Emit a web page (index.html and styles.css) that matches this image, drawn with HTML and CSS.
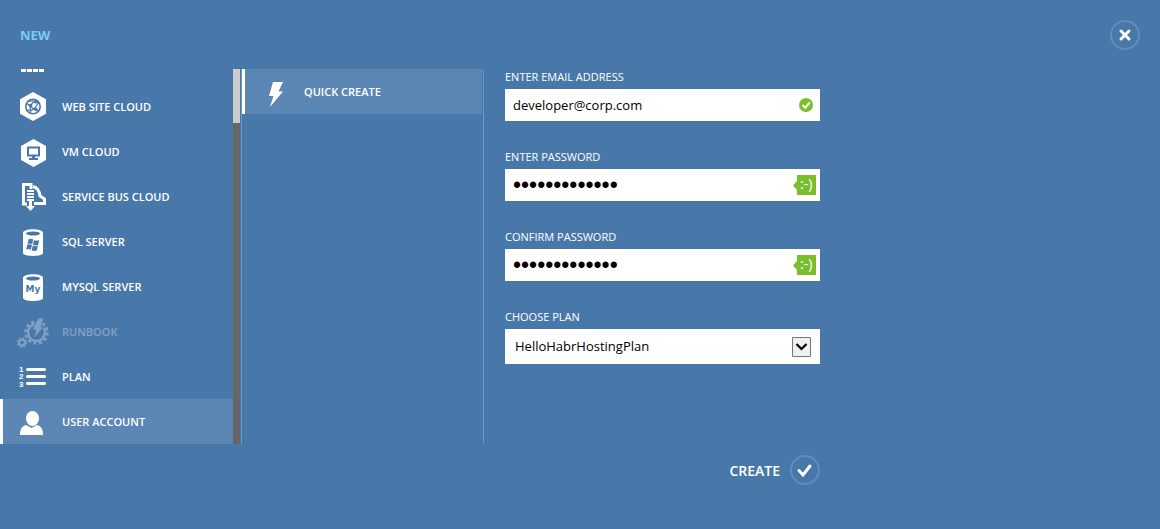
FILE: index.html
```html
<!DOCTYPE html>
<html lang="en">
<head>
<meta charset="utf-8">
<title>New user account</title>
<link rel="stylesheet" href="styles.css">
</head>
<body>
<header class="top">
  <h1 class="title">NEW</h1>
  <button class="round" type="button" aria-label="Close">
    <svg width="30" height="30" viewBox="0 0 30 30"><path d="M11 11l8 8M19 11l-8 8" stroke="#fff" stroke-width="3" stroke-linecap="round"/></svg>
  </button>
</header>
<main class="drawer">
  <nav class="services">
    <ul class="list">
      <li class="item item-cut">
        <svg class="icon" width="32" height="32" viewBox="0 0 32 32"><path d="M4 0h5v3H4zM10 0h5v3h-5zM16 0h5v3h-5zM22 0h5v3h-5z" fill="#fff"/></svg>
      </li>
      <li class="item">
        <svg class="icon" width="32" height="32" viewBox="0 0 32 32"><path d="M16 1l13 7.300v14.500L16 30 3 22.800V8.300z" fill="#fff"/><g fill="none" stroke="#4878aa"><circle cx="16" cy="15.500" r="7.200" stroke-width="1.600"/><path d="M10 12.500q6 5.500 12 8M14 21.500q-3-7 4.500-12M11 10.500q6-2 11.500 2.500M11 19q6 2 10-7" stroke-width="1.200"/></g><g fill="#4878aa"><circle cx="13.500" cy="14.500" r="1.800"/><circle cx="18.500" cy="11" r="1.500"/><circle cx="19" cy="18.500" r="1.700"/></g></svg>
        <a class="name" href="#">WEB SITE CLOUD</a>
      </li>
      <li class="item">
        <svg class="icon" width="32" height="32" viewBox="0 0 32 32"><path d="M16.500 3L29 10v14l-12.500 7L4 24V10z" fill="#fff"/><path d="M11 11.500h11v8H11z" fill="none" stroke="#4878aa" stroke-width="2"/><path d="M15 20h3v2h3v2h-9v-2h3z" fill="#4878aa"/></svg>
        <a class="name" href="#">VM CLOUD</a>
      </li>
      <li class="item">
        <svg class="icon" width="32" height="32" viewBox="0 0 32 32"><path d="M10 23H6.500V3.500H14V8M16 5.500c4.500 1 6.500 5 7 9.500l4.500 3V22.500H17" fill="none" stroke="#fff" stroke-width="3"/><path d="M9 9h9l1 1v11H9z" fill="#4878aa"/><path d="M10 9h7v2h-7zM10 12h7v2h-7zM10 15h7v2h-7zM10 18h7v2h-7zM12 20h3v5h3l-4.500 5L9 25h3z" fill="#fff"/></svg>
        <a class="name" href="#">SERVICE BUS CLOUD</a>
      </li>
      <li class="item">
        <svg class="icon" width="32" height="32" viewBox="0 0 32 32"><path d="M6 7c0-5 20-5 20 0v20c0 4-20 4-20 0z" fill="#fff"/><ellipse cx="16" cy="7.500" rx="7" ry="2" fill="#4878aa"/><path d="M11.500 13.500q2.500-1.500 4.700 0l-1 4.700q-2.500-1.500-4.700 0zM17 14q2.500 1.500 5.200 0l-1 4.700q-2.500 1.500-5.200 0zM10.200 19q2.500-1.500 4.700 0l-1 4.700q-2.500-1.500-4.700 0zM15.700 19.500q2.500 1.500 5.200 0l-1 4.700q-2.500 1.500-5.200 0z" fill="#4878aa"/></svg>
        <a class="name" href="#">SQL SERVER</a>
      </li>
      <li class="item">
        <svg class="icon" width="32" height="32" viewBox="0 0 32 32"><path d="M6 7c0-5 20-5 20 0v20c0 4-20 4-20 0z" fill="#fff"/><ellipse cx="16" cy="7.500" rx="7" ry="2" fill="#4878aa"/><text class="mark-my" x="16" y="21" text-anchor="middle">My</text></svg>
        <a class="name" href="#">MYSQL SERVER</a>
      </li>
      <li class="item item-off">
        <svg class="icon" width="32" height="32" viewBox="0 0 32 32"><g fill="none" stroke="#fff"><circle cx="19.500" cy="16.500" r="8.500" stroke-width="2.500"/><circle cx="19.500" cy="16.500" r="11" stroke-width="2.500" stroke-dasharray="3 2.760"/><circle cx="5" cy="26.500" r="2.800" stroke-width="2"/><circle cx="5" cy="26.500" r="4.200" stroke-width="2" stroke-dasharray="1.800 1.500"/></g><path d="M21 2h6l-3 9h3L16 23l3-9h-4z" fill="#fff" stroke="#4878aa"/></svg>
        <a class="name" aria-disabled="true">RUNBOOK</a>
      </li>
      <li class="item">
        <svg class="icon" width="32" height="32" viewBox="0 0 32 32"><path d="M10.500 8.500h17M10.500 15.500h17M10.500 22.500h17" stroke="#fff" stroke-width="3" stroke-linecap="round"/><g class="mark-num"><text x="2" y="11">1</text><text x="2" y="18">2</text><text x="2" y="26">3</text></g></svg>
        <a class="name" href="#">PLAN</a>
      </li>
      <li class="item item-on">
        <svg class="icon" width="32" height="32" viewBox="0 0 32 32"><path d="M3 29c0-6 2-9 6-10l5.500 3L20 19c4 1 6 4 6 10z" fill="#fff"/><ellipse cx="15.500" cy="12.500" rx="6.500" ry="7.500" fill="#fff"/></svg>
        <a class="name" href="#" aria-current="true">USER ACCOUNT</a>
      </li>
    </ul>
    <div class="track"><div class="thumb"></div></div>
  </nav>
  <section class="modes">
    <div class="item item-on">
      <svg class="icon" width="32" height="32" viewBox="0 0 32 32"><path d="M13 6h10l-4.500 9.500H23L10 31l3.500-11H9z" fill="#fff"/></svg>
      <a class="name" href="#">QUICK CREATE</a>
    </div>
  </section>
  <form class="form">
    <div class="field">
      <label class="label" for="email">ENTER EMAIL ADDRESS</label>
      <div class="box">
        <input class="input" id="email" type="text" value="developer@corp.com">
        <svg class="badge badge-ok" width="14" height="14" viewBox="0 0 14 14"><circle cx="7" cy="7" r="7" fill="#78be2d"/><path d="M3.500 7l2.700 2.800 4.500-5.300" fill="none" stroke="#fff" stroke-width="2"/></svg>
      </div>
    </div>
    <div class="field">
      <label class="label" for="pass">ENTER PASSWORD</label>
      <div class="box">
        <input class="input input-secret" id="pass" type="password" value="developer1234">
        <svg class="badge" width="23" height="20" viewBox="0 0 23 20"><path d="M4 0h19v20H4v-5L0 10.500 4 6z" fill="#78be2d"/><text class="mark-smile" x="7" y="14">:-)</text></svg>
      </div>
    </div>
    <div class="field">
      <label class="label" for="confirm">CONFIRM PASSWORD</label>
      <div class="box">
        <input class="input input-secret" id="confirm" type="password" value="developer1234">
        <svg class="badge" width="23" height="20" viewBox="0 0 23 20"><path d="M4 0h19v20H4v-5L0 10.500 4 6z" fill="#78be2d"/><text class="mark-smile" x="7" y="14">:-)</text></svg>
      </div>
    </div>
    <div class="field">
      <label class="label" for="plan">CHOOSE PLAN</label>
      <div class="box">
        <select class="input select" id="plan"><option>HelloHabrHostingPlan</option></select>
        <svg class="badge badge-drop" width="19" height="20" viewBox="0 0 19 20"><path d="M.5.500h18v19H.500z" fill="#f0f0f0" stroke="#777"/><path d="M4.500 7l5 5 5-5" fill="none" stroke="#000" stroke-width="2.200"/></svg>
      </div>
    </div>
    <div class="actions">
      <label class="create" for="create">CREATE</label>
      <button class="round" id="create" type="button">
        <svg width="30" height="30" viewBox="0 0 30 30"><path d="M9 15.500l4 4.500L20 11" fill="none" stroke="#fff" stroke-width="3" stroke-linecap="round"/></svg>
      </button>
    </div>
  </form>
</main>
</body>
</html>
```
FILE: styles.css
```css
* { box-sizing: border-box; }
body {
  margin: 0;
  background: #4878aa;
  color: #fff;
  font-family: "Open Sans", "Noto Sans", sans-serif;
  font-size: 11px;
}
.top {
  display: flex;
  justify-content: space-between;
  align-items: center;
  padding: 20px 20px 19px;
}
.title {
  margin: 0;
  font-size: 13px;
  line-height: 20px;
  font-weight: 700;
  color: #7accf4;
}
.round {
  display: block;
  width: 30px;
  height: 30px;
  padding: 0;
  border: 0;
  border-radius: 50%;
  box-shadow: inset 0 0 0 2px #628dbb;
  background: none;
}
.round svg { display: block; }
.drawer {
  display: flex;
  align-items: flex-start;
}
.services {
  display: flex;
  width: 240px;
}
.list {
  flex: 1;
  margin: 0;
  padding: 0;
  list-style: none;
}
.item {
  display: flex;
  align-items: center;
  gap: 13px;
  height: 45px;
  padding-left: 17px;
}
.item-cut {
  height: 15px;
  align-items: flex-start;
  overflow: hidden;
}
.item-on {
  padding-left: 14px;
  border-left: 3px solid #fff;
  background: #5c87b4;
}
.item-off { opacity: 0.3; }
.icon { flex: none; }
.name {
  color: inherit;
  font-weight: 600;
  text-decoration: none;
}
.mark-my {
  font: bold 9px "DejaVu Sans", sans-serif;
  fill: #4878aa;
}
.mark-num {
  font: bold 8px "Liberation Sans", sans-serif;
  fill: #fff;
}
.mark-smile {
  font: 14px "Open Sans", sans-serif;
  fill: #fff;
}
.track {
  width: 7px;
  background: #666;
}
.thumb {
  height: 54px;
  background: #ccc;
}
.modes {
  align-self: stretch;
  width: 243px;
  height: 375px;
  margin-left: 1px;
  padding-right: 1px;
  border-left: 1px solid #6c97c4;
  border-right: 1px solid #6c97c4;
}
.modes .item { padding-left: 15px; gap: 12px; }
.form {
  width: 315px;
  margin-left: 21px;
}
.field { margin-bottom: 28px; }
.label {
  display: block;
  margin-bottom: 4px;
  line-height: 16px;
}
.box {
  position: relative;
  display: flex;
  align-items: center;
}
.input {
  width: 100%;
  height: 32px;
  padding: 0 32px 0 8px;
  border: 0;
  border-radius: 0;
  background: #fff;
  color: #000;
  font: 13px "Open Sans", "Noto Sans", sans-serif;
}
.input-secret { font: 23px "Liberation Sans", sans-serif; }
.select {
  height: 35px;
  padding-left: 10px;
  padding-bottom: 2px;
  appearance: none;
}
.badge {
  position: absolute;
  right: 4px;
  pointer-events: none;
}
.badge-ok { right: 7px; }
.badge-drop { right: 9px; }
.actions {
  display: flex;
  justify-content: flex-end;
  align-items: center;
  gap: 10px;
  margin-top: 91px;
}
.create {
  font-size: 14px;
  font-weight: 600;
}
```
